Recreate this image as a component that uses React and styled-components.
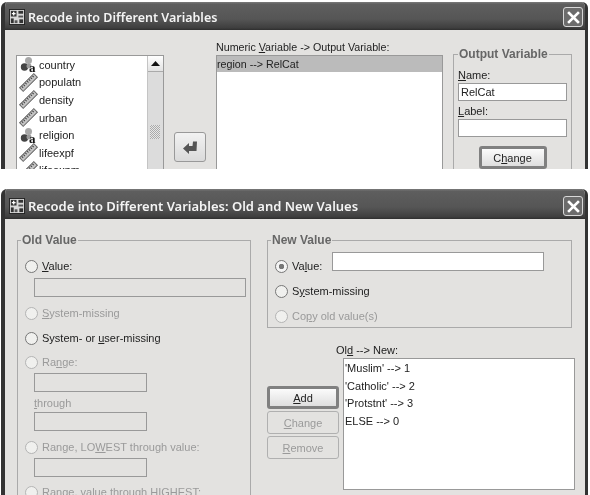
import styled, { createGlobalStyle } from 'styled-components';

const GlobalStyle = createGlobalStyle`
  html, body {
    margin: 0;
    padding: 0;
    background: #fff;
  }
  body {
    font-family: 'Liberation Sans', Arial, sans-serif;
    font-size: 11px;
    color: #222;
  }
`;

const sourceVars = [
  { name: 'country', kind: 'nominal' },
  { name: 'populatn', kind: 'scale' },
  { name: 'density', kind: 'scale' },
  { name: 'urban', kind: 'scale' },
  { name: 'religion', kind: 'nominal' },
  { name: 'lifeexpf', kind: 'scale' },
  { name: 'lifeexpm', kind: 'scale' },
];

const mappings = ["'Muslim' --> 1", "'Catholic' --> 2", "'Protstnt' --> 3", 'ELSE --> 0'];

const AppIcon = () => (
  <svg width='16' height='16' viewBox='0 0 17 17'>
    <rect x='0.5' y='0.5' width='16' height='16' fill='#d8d8d8' stroke='#222' />
    <rect x='2' y='2' width='6' height='6' fill='#333' />
    <rect x='10' y='2' width='5' height='3' fill='#333' />
    <rect x='10' y='7' width='5' height='2' fill='#555' />
    <rect x='2' y='10' width='3' height='5' fill='#333' />
    <rect x='6' y='12' width='3' height='3' fill='#555' />
    <rect x='11' y='11' width='4' height='4' fill='#333' />
    <path d='M5 3v4M3 5h4' stroke='#fff' strokeWidth='1.4' />
  </svg>
);

const CloseIcon = () => (
  <svg width='13' height='13' viewBox='0 0 13 13'>
    <path d='M2 2l9 9M11 2l-9 9' stroke='#fff' strokeWidth='2.6' strokeLinecap='square' />
  </svg>
);

const NominalIcon = () => (
  <VarSvg viewBox='0 0 17 17'>
    <circle cx='8.5' cy='4.5' r='3.5' fill='#a8a8a8' />
    <circle cx='4.5' cy='11' r='3.7' fill='#444' />
    <circle cx='9' cy='10' r='2.5' fill='#9a9a9a' />
    <text x='9' y='16' fontFamily='Liberation Serif, serif' fontWeight='700' fontSize='13' fill='#111'>
      a
    </text>
  </VarSvg>
);

const ScaleIcon = () => (
  <VarSvg viewBox='0 0 17 17'>
    <g transform='rotate(-45 8.5 8.5)'>
      <rect x='-1.5' y='6' width='20' height='5' fill='#c4c4c4' stroke='#666' />
      <path d='M1 6.5v2M3.5 6.5v2M6 6.5v2M8.5 6.5v2M11 6.5v2M13.5 6.5v2M16 6.5v2' stroke='#444' />
    </g>
  </VarSvg>
);

const ArrowIcon = () => (
  <svg width='16' height='14' viewBox='0 0 16 14'>
    <path d='M1 8.5L7 3v3h3.5L11 1.5h4L14.5 11H7v3z' fill='#555' />
  </svg>
);

const UpIcon = () => (
  <svg width='9' height='5' viewBox='0 0 9 5'>
    <path d='M4.5 0L9 5H0z' fill='#111' />
  </svg>
);

const Option = ({ label, checked, disabled, top }) => (
  <OptionRow $top={top} $disabled={disabled}>
    <Radio type='radio' readOnly checked={!!checked} $disabled={disabled} />
    <span>{label}</span>
  </OptionRow>
);

const App = () => {
  return (
    <>
      <GlobalStyle />
      <Page>
        <Window $height={167}>
          <TitleBar $height={28} $top={2}>
            <AppIcon />
            <Title $size={12.5}>Recode into Different Variables</Title>
            <CloseButton>
              <CloseIcon />
            </CloseButton>
          </TitleBar>
          <RecodeBody>
            <SourceList>
              <VarItems>
                {sourceVars.map(v => (
                  <VarItem key={v.name}>
                    {v.kind === 'nominal' ? <NominalIcon /> : <ScaleIcon />}
                    <span>{v.name}</span>
                  </VarItem>
                ))}
              </VarItems>
              <ScrollBar>
                <ScrollUp>
                  <UpIcon />
                </ScrollUp>
                <ScrollGrip />
              </ScrollBar>
            </SourceList>
            <MoveButton>
              <ArrowIcon />
            </MoveButton>
            <OutputColumn>
              <FieldLabel>
                Numeric <u>V</u>ariable -&gt; Output Variable:
              </FieldLabel>
              <OutputList>
                <SelectedRow>region --&gt; RelCat</SelectedRow>
              </OutputList>
            </OutputColumn>
            <OutputGroup>
              <GroupTitle $shift={0}>Output Variable</GroupTitle>
              <FieldLabel>
                <u>N</u>ame:
              </FieldLabel>
              <TextBox readOnly value='RelCat' />
              <LabelGap>
                <FieldLabel>
                  <u>L</u>abel:
                </FieldLabel>
              </LabelGap>
              <TextBox readOnly value='' />
              <ChangeWrap>
                <PushButton $primary $width={68}>
                  C<u>h</u>ange
                </PushButton>
              </ChangeWrap>
            </OutputGroup>
          </RecodeBody>
        </Window>

        <Window $height={306}>
          <TitleBar $height={30} $top={4}>
            <AppIcon />
            <Title $size={13}>Recode into Different Variables: Old and New Values</Title>
            <CloseButton>
              <CloseIcon />
            </CloseButton>
          </TitleBar>
          <ValuesBody>
            <OldGroup>
              <GroupTitle $shift={-4}>Old Value</GroupTitle>
              <Option top={11} label={<><u>V</u>alue:</>} />
              <IndentBox $width={212} $top={4} />
              <Option top={8} disabled label={<><u>S</u>ystem-missing</>} />
              <Option top={9} label={<>System- or <u>u</u>ser-missing</>} />
              <Option top={8} disabled label={<>Ra<u>n</u>ge:</>} />
              <IndentBox $width={113} $top={3} />
              <ThroughLabel>
                <u>t</u>hrough
              </ThroughLabel>
              <IndentBox $width={113} $top={1} />
              <Option top={8} disabled label={<>Range, LO<u>W</u>EST through value:</>} />
              <IndentBox $width={113} $top={3} />
              <Option top={7} disabled label={<>Range, value through HIGHEST:</>} />
            </OldGroup>

            <RightColumn>
              <NewGroup>
                <GroupTitle $shift={-4}>New Value</GroupTitle>
                <ValueRow>
                  <Option top={0} checked label={<>Va<u>l</u>ue:</>} />
                  <ValueBox readOnly value='' />
                </ValueRow>
                <Option top={12} label={<>S<u>y</u>stem-missing</>} />
                <Option top={9} disabled label={<>Co<u>p</u>y old value(s)</>} />
              </NewGroup>
              <LowerRow>
                <ButtonStack>
                  <PushButton $primary $width={72}>
                    <u>A</u>dd
                  </PushButton>
                  <PushButton disabled $width={72}>
                    <u>C</u>hange
                  </PushButton>
                  <PushButton disabled $width={72}>
                    <u>R</u>emove
                  </PushButton>
                </ButtonStack>
                <MappingColumn>
                  <MappingLabel>
                    Ol<u>d</u> --&gt; New:
                  </MappingLabel>
                  <MappingList>
                    {mappings.map(m => (
                      <MappingRow key={m}>{m}</MappingRow>
                    ))}
                  </MappingList>
                </MappingColumn>
              </LowerRow>
            </RightColumn>
          </ValuesBody>
        </Window>
      </Page>
    </>
  );
};

const Page = styled.div`
  display: flex;
  flex-direction: column;
  gap: 20px;
  width: 590px;
  height: 495px;
  padding: 2px 2px 0 1px;
  box-sizing: border-box;
  overflow: hidden;
  filter: blur(0.4px);
`;

const Window = styled.section`
  display: flex;
  flex-direction: column;
  flex: none;
  height: ${props => props.$height}px;
  overflow: hidden;
  background: #e3e2e0;
  border-left: 4px solid #333;
  border-right: 3px solid #333;
  border-radius: 6px 6px 0 0;
  box-sizing: border-box;
  & u {
    text-underline-offset: 1px;
  }
`;

const TitleBar = styled.header`
  display: flex;
  align-items: center;
  flex: none;
  height: ${props => props.$height}px;
  margin: 0 -4px 0 -4px;
  padding: ${props => props.$top}px 6px 0 8px;
  box-sizing: border-box;
  background: linear-gradient(#7a7a7a 0, #5e5e5e 8%, #565656 60%, #3f3f3f 92%, #2e2e2e 100%);
`;

const Title = styled.h1`
  flex: 1;
  margin: 0 0 0 3px;
  color: #f4f4f4;
  font-family: 'Noto Sans', sans-serif;
  font-size: ${props => props.$size}px;
  font-weight: 600;
`;

const CloseButton = styled.div`
  display: flex;
  align-items: center;
  justify-content: center;
  width: 20px;
  height: 20px;
  background: #6c6c6c;
  border: 1px solid #d8d8d8;
  border-radius: 3px;
  box-sizing: border-box;
`;

const RecodeBody = styled.div`
  display: flex;
  align-items: flex-start;
  padding: 10px 0 0 11px;
`;

const SourceList = styled.div`
  display: flex;
  flex: none;
  width: 148px;
  height: 130px;
  margin-top: 15px;
  background: #fff;
  border: 1px solid #999;
  box-sizing: border-box;
`;

const VarItems = styled.ul`
  flex: 1;
  margin: 0;
  padding: 0 0 0 3px;
  list-style: none;
`;

const VarItem = styled.li`
  display: flex;
  align-items: center;
  gap: 2px;
  height: 17.6px;
`;

const VarSvg = styled.svg`
  flex: none;
  width: 17px;
  height: 17px;
  overflow: visible;
`;

const ScrollBar = styled.div`
  display: flex;
  flex-direction: column;
  flex: none;
  width: 15px;
  background: #dcdcdc;
  border-left: 1px solid #c4c4c4;
`;

const ScrollUp = styled.div`
  display: flex;
  align-items: center;
  justify-content: center;
  height: 15px;
  background: linear-gradient(#fff, #e2e2e2);
  border-bottom: 1px solid #aaa;
`;

const ScrollGrip = styled.div`
  width: 10px;
  height: 14px;
  margin: 53px 0 0 2px;
  background: repeating-conic-gradient(#aaa 0 25%, #e6e6e6 0 50%) 0 0 / 2px 2px;
`;

const MoveButton = styled.button`
  display: flex;
  align-items: center;
  justify-content: center;
  flex: none;
  width: 32px;
  height: 30px;
  margin: 92px 0 0 10px;
  padding: 0;
  background: linear-gradient(#f2f2f2, #dadada);
  border: 1px solid #999;
  border-radius: 3px;
`;

const OutputColumn = styled.div`
  flex: none;
  width: 227px;
  margin-left: 10px;
  font-size: 10.7px;
`;

const FieldLabel = styled.div`
  height: 14px;
  line-height: 14px;
  white-space: nowrap;
`;

const OutputList = styled.div`
  height: 130px;
  margin-top: 1px;
  background: #fff;
  border: 1px solid #999;
  box-sizing: border-box;
`;

const SelectedRow = styled.div`
  height: 16px;
  line-height: 16px;
  background: #bbb;
`;

const OutputGroup = styled.fieldset`
  flex: none;
  width: 118px;
  height: 140px;
  margin: 7px 0 0 10px;
  padding: 7px 4px 0;
  border: 1px solid #aaa;
  box-sizing: border-box;
`;

const GroupTitle = styled.legend`
  margin-left: ${props => props.$shift}px;
  padding: 0 1px;
  color: #666;
  font-family: 'Liberation Sans', Arial, sans-serif;
  font-size: 12px;
  font-weight: 700;
  line-height: 14px;
`;

const TextBox = styled.input`
  display: block;
  width: 109px;
  height: 18px;
  margin: 1px 0 0;
  padding: 0 2px;
  background: #fff;
  border: 1px solid #999;
  box-sizing: border-box;
  color: #222;
  font: 11px 'Liberation Sans', Arial, sans-serif;
  outline: none;
`;

const LabelGap = styled.div`
  margin-top: 3px;
`;

const ChangeWrap = styled.div`
  display: flex;
  justify-content: center;
  margin-top: 9px;
`;

const PushButton = styled.button`
  width: ${props => props.$width}px;
  height: 23px;
  padding: 0;
  background: ${props => (props.$primary ? 'linear-gradient(#fbfbfb, #dedede)' : 'transparent')};
  border: ${props => (props.$primary ? '3px solid #808080' : '1px solid #b0b0b0')};
  border-radius: 3px;
  box-sizing: border-box;
  color: ${props => (props.disabled ? '#9a9a9a' : '#222')};
  font: 11px 'Liberation Sans', Arial, sans-serif;
`;

const ValuesBody = styled.div`
  display: flex;
  align-items: flex-start;
  padding: 14px 0 0 12px;
`;

const OldGroup = styled.fieldset`
  flex: none;
  width: 234px;
  height: 300px;
  margin: 0;
  padding: 0 4px 0 7px;
  border: 1px solid #aaa;
  box-sizing: border-box;
`;

const OptionRow = styled.label`
  display: flex;
  align-items: center;
  gap: 4px;
  height: 16px;
  margin-top: ${props => props.$top}px;
  color: ${props => (props.$disabled ? '#9a9a9a' : '#222')};
  white-space: nowrap;
`;

const Radio = styled.input`
  appearance: none;
  flex: none;
  width: 13px;
  height: 13px;
  margin: 0;
  background: ${props =>
    props.checked ? 'radial-gradient(circle, #777 0 2.5px, #f4f4f4 3px)' : '#f0f0ee'};
  border: 1px solid ${props => (props.$disabled ? '#b4b4b4' : '#777')};
  border-radius: 50%;
`;

const IndentBox = styled.div`
  width: ${props => props.$width}px;
  height: 19px;
  margin: ${props => props.$top}px 0 0 9px;
  border: 1px solid #999;
  box-sizing: border-box;
`;

const ThroughLabel = styled.div`
  height: 16px;
  margin: 3px 0 0 9px;
  color: #9a9a9a;
  line-height: 16px;
`;

const RightColumn = styled.div`
  flex: none;
  width: 309px;
  margin-left: 16px;
`;

const NewGroup = styled.fieldset`
  width: 305px;
  height: 95px;
  margin: 0;
  padding: 5px 4px 0 7px;
  border: 1px solid #aaa;
  box-sizing: border-box;
`;

const ValueRow = styled.div`
  display: flex;
  align-items: flex-start;
  gap: 10px;
  height: 19px;
  & > label {
    padding-top: 6px;
  }
`;

const ValueBox = styled.input`
  width: 212px;
  height: 19px;
  margin: 0;
  padding: 0 2px;
  background: #fff;
  border: 1px solid #999;
  box-sizing: border-box;
  outline: none;
`;

const LowerRow = styled.div`
  display: flex;
  align-items: flex-start;
  margin-top: 15px;
`;

const ButtonStack = styled.div`
  display: flex;
  flex-direction: column;
  flex: none;
  gap: 2px;
  margin-top: 43px;
`;

const MappingColumn = styled.div`
  flex: none;
  width: 232px;
  margin-left: 4px;
`;

const MappingLabel = styled.div`
  height: 14px;
  margin-left: -7px;
  line-height: 14px;
`;

const MappingList = styled.ul`
  height: 132px;
  margin: 1px 0 0;
  padding: 1px 0 0 1px;
  background: #fff;
  border: 1px solid #999;
  box-sizing: border-box;
  list-style: none;
`;

const MappingRow = styled.li`
  height: 17.5px;
  line-height: 17.5px;
`;

export default App;
